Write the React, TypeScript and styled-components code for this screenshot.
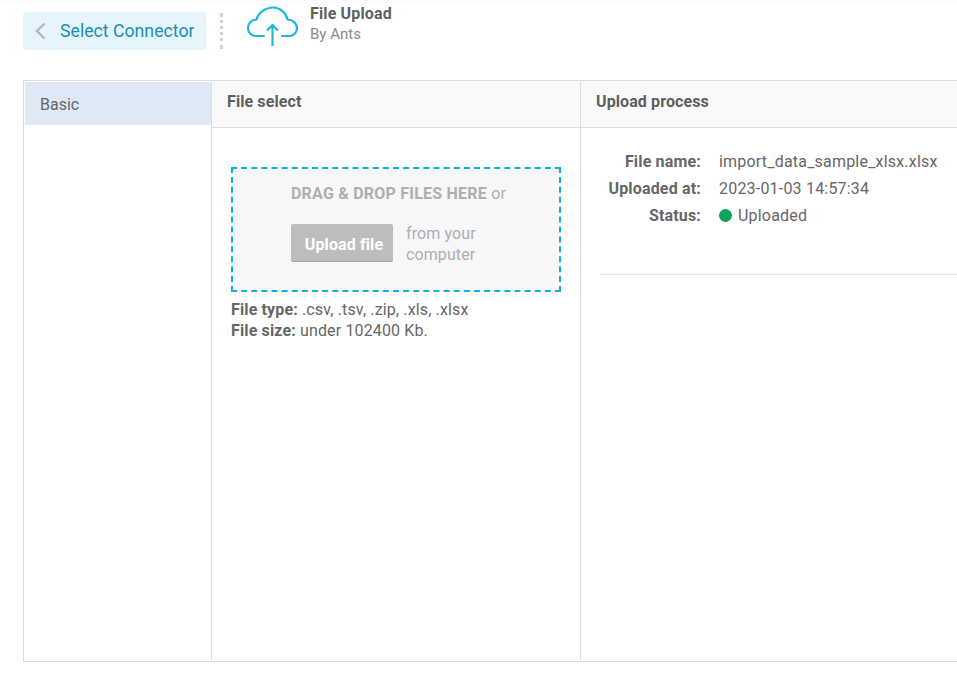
import React from "react";
import styled, { createGlobalStyle } from "styled-components";

const Global = createGlobalStyle`
  html, body { margin: 0; padding: 0; background: #fff; }
  body { font-family: Roboto, "Liberation Sans", sans-serif; color: #5f5f5f; overflow: hidden; }
`;
const Page = styled.div`
  width: 957px; height: 681px; overflow: hidden; box-sizing: border-box;
  padding-left: 23px; border-top: 1px solid #fafafa;
`;
const TopBar = styled.header`
  display: flex; height: 79px; align-items: flex-start;
`;
const BackButton = styled.button`
  box-sizing: border-box; width: 183px; height: 38px; margin-top: 11px;
  display: flex; align-items: center; gap: 14px; padding: 0 12px 0 11px;
  border: 0; border-radius: 4px; background: #e6f5fb; color: #1a8fb5;
  font: 400 17.7px Roboto, sans-serif; overflow: hidden; white-space: nowrap;
`;
const BackLabel = styled.span`
  display: block; width: 134px; overflow: hidden; text-align: left; flex: none; margin-top: -1px;
`;
const DottedDivider = styled.div`
  width: 0; height: 36px; margin: 12px 0 0 14px; border-left: 3px dotted #d4d4d4;
`;
const CloudIcon = styled.svg`
  width: 52px; height: 42px; margin: 5px 0 0 23px; flex: none;
`;
const Titles = styled.div`
  margin: 3px 0 0 12px; display: flex; flex-direction: column;
`;
const Title = styled.div`
  font-size: 16px; font-weight: 700; line-height: 20px; color: #5f5f5f; letter-spacing: 0.15px;
`;
const Subtitle = styled.div`
  font-size: 15px; line-height: 20px; color: #8a8a8a;
`;
const Frame = styled.section`
  box-sizing: border-box; width: 1000px; height: 582px; padding: 1px 0 1px 1px;
  display: flex; border: 1px solid #dcdcdc;
`;
const Sidebar = styled.nav`
  width: 186px; flex: none; height: 578px;
`;
const Tab = styled.div`
  height: 43px; box-sizing: border-box; padding: 1px 0 0 15px; display: flex; align-items: center;
  background: #dfe9f5; font-size: 16px; color: #666;
`;
const Column = styled.div<{ $width: number }>`
  width: ${(p) => p.$width}px; flex: none; height: 578px; box-sizing: border-box;
  border-left: 1px solid #dcdcdc;
`;
const ColumnHeader = styled.div`
  box-sizing: border-box; height: 47px; margin-top: -1px; padding: 0 15px 5px;
  display: flex; align-items: center; background: #f9f9f9;
  border-bottom: 1px solid #dcdcdc; font-size: 16px; font-weight: 700; color: #5f5f5f;
  letter-spacing: 0.1px;
`;
const SelectBody = styled.div`
  padding: 39px 19px 0;
`;
const DropZone = styled.div`
  box-sizing: border-box; width: 330px; height: 125px; border: 2px dashed #0eaedb;
  background: #f6f7f9; padding: 15px 58px 0; color: #aeaeae; font-size: 16px;
`;
const DropTitle = styled.div`
  line-height: 20px; white-space: nowrap; letter-spacing: 0.22px;
`;
const Strong = styled.strong`
  font-weight: 700;
`;
const UploadRow = styled.div`
  display: flex; align-items: flex-start; gap: 13px; margin-top: 20px;
`;
const UploadButton = styled.button`
  box-sizing: border-box; width: 102px; height: 38px; border: 0; border-bottom: 1px solid #a6a6a6;
  border-radius: 2px; background: #bdbdbd; color: #fff; font: 700 16px Roboto, sans-serif; padding: 3px 0 0 4px;
  letter-spacing: 0.1px;
`;
const FromText = styled.div`
  line-height: 21px; width: 90px; letter-spacing: 0.1px; margin-top: -1px;
`;
const Hint = styled.div`
  margin-top: 7px; font-size: 16px; line-height: 21px; color: #666; letter-spacing: 0.14px;
`;
const ProcessBody = styled.div`
  padding: 20px 0 0 19px;
`;
const Info = styled.dl`
  margin: 0; display: grid; grid-template-columns: 101px 1fr; column-gap: 18px;
  row-gap: 0; padding-bottom: 45px; border-bottom: 1px solid #e4e4e4; font-size: 16px;
`;
const Key = styled.dt`
  text-align: right; font-weight: 700; line-height: 27px; color: #666; letter-spacing: 0.17px; white-space: nowrap;
`;
const Val = styled.dd`
  margin: 0; line-height: 27px; color: #666; display: flex; align-items: center; gap: 6px; letter-spacing: 0.2px;
`;
const Dot = styled.span`
  width: 13px; height: 13px; border-radius: 50%; background: #0aa45a; flex: none;
`;

export default function App() {
  return (
    <Page>
      <Global />
      <TopBar>
        <BackButton>
          <svg width="12" height="20" viewBox="0 0 12 20" fill="none" style={{ flex: "none" }}>
            <path d="M10.500 2.500 3 10l7.500 7.500" stroke="#b0b8bc" strokeWidth="2.400" />
          </svg>
          <BackLabel>Select Connector</BackLabel>
        </BackButton>
        <DottedDivider />
        <CloudIcon viewBox="0 0 52 42" fill="none">
          <path
            d="M18 30H10C5.500 30 2 26.500 2 22C2 17.500 5.500 13.500 10.500 13.500C12 6.500 20 1.500 27 1.500C34 1.500 40 6.500 41.500 13.500C46.500 13.500 51 17.500 51 22C51 26.500 47.500 30 43 30H36"
            stroke="#1fb5e3" strokeWidth="2.200" strokeLinecap="round"
          />
          <path d="M26.500 40V19M21 24.500 26.500 19l5.500 5.500" stroke="#1fb5e3" strokeWidth="2.200" />
        </CloudIcon>
        <Titles>
          <Title>File Upload</Title>
          <Subtitle>By Ants</Subtitle>
        </Titles>
      </TopBar>
      <Frame>
        <Sidebar>
          <Tab>Basic</Tab>
        </Sidebar>
        <Column $width={369}>
          <ColumnHeader>File select</ColumnHeader>
          <SelectBody>
            <DropZone>
              <DropTitle>
                <Strong>DRAG &amp; DROP FILES HERE</Strong> or
              </DropTitle>
              <UploadRow>
                <UploadButton>Upload file</UploadButton>
                <FromText>from your computer</FromText>
              </UploadRow>
            </DropZone>
            <Hint>
              <Strong>File type:</Strong> .csv, .tsv, .zip, .xls, .xlsx
              <br />
              <Strong>File size:</Strong> under 102400 Kb.
            </Hint>
          </SelectBody>
        </Column>
        <Column $width={420}>
          <ColumnHeader>Upload process</ColumnHeader>
          <ProcessBody>
            <Info>
              <Key>File name:</Key>
              <Val>import_data_sample_xlsx.xlsx</Val>
              <Key>Uploaded at:</Key>
              <Val>2023-01-03 14:57:34</Val>
              <Key>Status:</Key>
              <Val>
                <Dot />
                Uploaded
              </Val>
            </Info>
          </ProcessBody>
        </Column>
      </Frame>
    </Page>
  );
}
